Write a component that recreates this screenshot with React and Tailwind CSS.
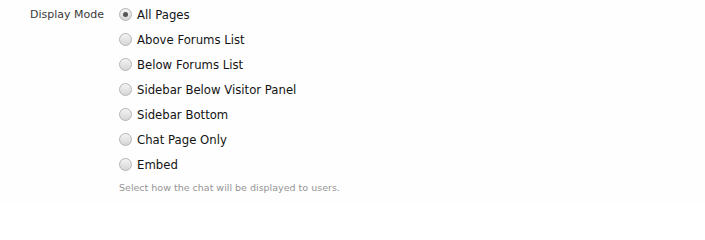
const options = [
  "All Pages",
  "Above Forums List",
  "Below Forums List",
  "Sidebar Below Visitor Panel",
  "Sidebar Bottom",
  "Chat Page Only",
  "Embed",
];

function Radio({ checked }) {
  return (
    <span className="relative flex h-[13px] w-[13px] shrink-0 items-center justify-center rounded-full border border-[#b4b4b4] bg-gradient-to-b from-[#f4f4f4] to-[#d6d6d6]">
      {checked && <span className="h-[5px] w-[5px] rounded-full bg-[#555]" />}
    </span>
  );
}

export default function App() {
  return (
    <div className="h-[203px] w-[705px] bg-[#fefefe] font-['DejaVu_Sans',sans-serif] text-[11.7px]">
      <div className="flex pt-[5px]">
        <div className="w-[105px] pr-[1px] pt-[2px] text-right text-[11px] text-[#3a3a3a]">
          Display Mode
        </div>
        <div className="flex flex-col pl-[14px]">
          {options.map((label, i) => (
            <label key={label} className="flex h-[25px] items-start gap-[5px] pt-[2px] text-[#141414]">
              <span className="pt-[1px]">
                <Radio checked={i === 0} />
              </span>
              <span className="leading-[16px]">{label}</span>
            </label>
          ))}
          <p className="pt-[1px] text-[9.5px] text-[#959595]">
            Select how the chat will be displayed to users.
          </p>
        </div>
      </div>
    </div>
  );
}
